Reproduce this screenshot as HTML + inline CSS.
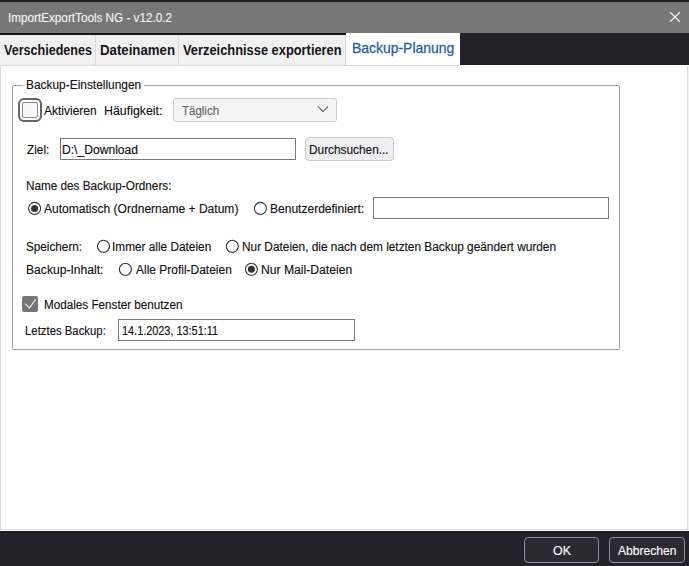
<!DOCTYPE html>
<html><head><meta charset="utf-8"><style>
html,body{margin:0;padding:0;width:689px;height:566px;overflow:hidden;background:#fff}
body{position:relative;font-family:"Liberation Sans",sans-serif}
.t{position:absolute;white-space:nowrap;font-family:"Liberation Sans",sans-serif}
.r{position:absolute;display:block}
</style></head><body>
<div class="r" style="left:0px;top:0px;width:689px;height:2px;background:#1c1b22"></div>
<div class="r" style="left:0px;top:2px;width:689px;height:31px;background:#777777"></div>
<div class="r" style="left:0px;top:33px;width:689px;height:2px;background:#15141a"></div>
<svg class="r" style="left:668px;top:10px" width="14" height="14" viewBox="0 0 14 14"><path d="M2.2 2.2 L11.8 11.8 M11.8 2.2 L2.2 11.8" stroke="#f2f2f2" stroke-width="1.25" fill="none"/></svg>
<div class="r" style="left:0px;top:35px;width:460px;height:30px;background:#f0f0f0"></div>
<div class="r" style="left:460px;top:33px;width:229px;height:32px;background:#23222b"></div>
<div class="r" style="left:95px;top:35px;width:1px;height:30px;background:#d9d9d9"></div>
<div class="r" style="left:178px;top:35px;width:1px;height:30px;background:#d9d9d9"></div>
<div class="r" style="left:345px;top:35px;width:1px;height:30px;background:#d9d9d9"></div>
<div class="r" style="left:346px;top:33px;width:114px;height:32px;background:#ffffff"></div>
<div class="r" style="left:0px;top:65px;width:460px;height:1px;background:#d9d9d9"></div>
<div class="r" style="left:0px;top:65px;width:1px;height:465px;background:#d9d9d9"></div>
<div class="r" style="left:687px;top:66px;width:1px;height:464px;background:#dcdcdc"></div>
<div class="r" style="left:688px;top:66px;width:1px;height:464px;background:#f0f0f0"></div>
<div class="r" style="left:0px;top:529px;width:688px;height:1px;background:#dcdcdc"></div>
<div class="r" style="left:0px;top:531px;width:689px;height:35px;background:#23222b"></div>
<div class="r" style="left:0px;top:531px;width:689px;height:1px;background:#16151b"></div>
<div class="r" style="left:524px;top:537px;width:75px;height:26px;background:#2b2a33;border:1.5px solid #8f8f9d;border-radius:4px;box-sizing:border-box"></div>
<div class="r" style="left:609px;top:537px;width:76px;height:26px;background:#2b2a33;border:1.5px solid #8f8f9d;border-radius:4px;box-sizing:border-box"></div>
<div class="r" style="left:12px;top:85px;width:608px;height:265px;border:1px solid #a0a0a0;border-radius:2px;box-sizing:border-box"></div>
<div class="r" style="left:23px;top:80px;width:121px;height:10px;background:#ffffff"></div>
<div class="r" style="left:18px;top:98px;width:24px;height:24px;border:2px solid #666666;border-radius:6px;box-sizing:border-box"></div>
<div class="r" style="left:22px;top:102px;width:16px;height:16px;border:1.5px solid #8c8c8c;background:#f7f7fc;border-radius:2px;box-sizing:border-box"></div>
<div class="r" style="left:173px;top:98px;width:164px;height:24px;background:#f5f5f5;border:1px solid #cfcfcf;border-radius:3px;box-sizing:border-box"></div>
<svg class="r" style="left:317px;top:105px" width="12" height="8" viewBox="0 0 12 8"><path d="M1 1.5 L6 6.5 L11 1.5" stroke="#4a4a4a" stroke-width="1.05" fill="none"/></svg>
<div class="r" style="left:60px;top:138px;width:236px;height:22px;border:1px solid #7a7a7a;background:#fff;box-sizing:border-box"></div>
<div class="r" style="left:305px;top:137px;width:89px;height:24px;background:#efeff2;border:1px solid #c7c7cc;border-radius:4px;box-sizing:border-box"></div>
<svg class="r" style="left:27px;top:201px" width="14" height="14" viewBox="0 0 14 14"><circle cx="7.60" cy="7.40" r="6" stroke="#333" stroke-width="1.1" fill="#fff"/><circle cx="7.60" cy="7.40" r="3.5" fill="#333"/></svg>
<svg class="r" style="left:253px;top:201px" width="14" height="14" viewBox="0 0 14 14"><circle cx="7.40" cy="7.40" r="6" stroke="#333" stroke-width="1.1" fill="#fff"/></svg>
<div class="r" style="left:373px;top:197px;width:236px;height:22px;border:1px solid #7a7a7a;background:#fff;box-sizing:border-box"></div>
<svg class="r" style="left:96px;top:239px" width="14" height="14" viewBox="0 0 14 14"><circle cx="7.50" cy="7.30" r="6" stroke="#333" stroke-width="1.1" fill="#fff"/></svg>
<svg class="r" style="left:225px;top:239px" width="14" height="14" viewBox="0 0 14 14"><circle cx="7.30" cy="7.30" r="6" stroke="#333" stroke-width="1.1" fill="#fff"/></svg>
<svg class="r" style="left:118px;top:262px" width="14" height="14" viewBox="0 0 14 14"><circle cx="7.40" cy="7.30" r="6" stroke="#333" stroke-width="1.1" fill="#fff"/></svg>
<svg class="r" style="left:244px;top:262px" width="14" height="14" viewBox="0 0 14 14"><circle cx="7.40" cy="7.30" r="6" stroke="#333" stroke-width="1.1" fill="#fff"/><circle cx="7.40" cy="7.30" r="3.5" fill="#333"/></svg>
<div class="r" style="left:22px;top:296px;width:16px;height:16px;background:#767676;border-radius:2px"></div>
<svg class="r" style="left:22px;top:296px" width="16" height="16" viewBox="0 0 16 16"><path d="M3.1 7.6 L7.5 11.8 L13.7 3.3" stroke="#ececec" stroke-width="1.15" fill="none"/></svg>
<div class="r" style="left:118px;top:319px;width:237px;height:22px;border:1px solid #7a7a7a;background:#fff;box-sizing:border-box"></div>
<div id="title" class="t" style="left:7.60px;top:11.00px;font-size:13px;line-height:13px;color:#f4f4f4;font-weight:normal;transform:scaleX(0.9008);transform-origin:0 0;-webkit-text-stroke:0.15px #f4f4f4;">ImportExportTools NG - v12.0.2</div>
<div id="tab1" class="t" style="left:3.60px;top:42.85px;font-size:14px;line-height:14px;color:#15141a;font-weight:bold;transform:scaleX(0.8974);transform-origin:0 0;">Verschiedenes</div>
<div id="tab2" class="t" style="left:100.39px;top:42.85px;font-size:14px;line-height:14px;color:#15141a;font-weight:bold;transform:scaleX(0.9455);transform-origin:0 0;">Dateinamen</div>
<div id="tab3" class="t" style="left:183.40px;top:42.85px;font-size:14px;line-height:14px;color:#15141a;font-weight:bold;transform:scaleX(0.9181);transform-origin:0 0;">Verzeichnisse exportieren</div>
<div id="tab4" class="t" style="left:351.99px;top:40.73px;font-size:14.5px;line-height:14.5px;color:#2a5f9f;font-weight:normal;transform:scaleX(0.9607);transform-origin:0 0;-webkit-text-stroke:0.3px #2a5f9f;">Backup-Planung</div>
<div id="legend" class="t" style="left:26.39px;top:78.64px;font-size:12px;line-height:12px;color:#121212;font-weight:normal;transform:scaleX(0.9926);transform-origin:0 0;-webkit-text-stroke:0.15px #121212;">Backup-Einstellungen</div>
<div id="aktiv" class="t" style="left:44.41px;top:105.14px;font-size:12px;line-height:12px;color:#121212;font-weight:normal;transform:scaleX(0.9985);transform-origin:0 0;-webkit-text-stroke:0.15px #121212;">Aktivieren</div>
<div id="haeuf" class="t" style="left:103.97px;top:105.14px;font-size:12px;line-height:12px;color:#121212;font-weight:normal;transform:scaleX(1.0310);transform-origin:0 0;-webkit-text-stroke:0.15px #121212;">Häufigkeit:</div>
<div id="taeglich" class="t" style="left:181.98px;top:105.44px;font-size:12px;line-height:12px;color:#666666;font-weight:normal;transform:scaleX(0.9579);transform-origin:0 0;-webkit-text-stroke:0.15px #666666;">Täglich</div>
<div id="ziel" class="t" style="left:26.81px;top:143.94px;font-size:12px;line-height:12px;color:#121212;font-weight:normal;transform:scaleX(0.9828);transform-origin:0 0;-webkit-text-stroke:0.15px #121212;">Ziel:</div>
<div id="download" class="t" style="left:61.97px;top:143.94px;font-size:12px;line-height:12px;color:#121212;font-weight:normal;transform:scaleX(1.0090);transform-origin:0 0;-webkit-text-stroke:0.15px #121212;">D:\_Download</div>
<div id="durch" class="t" style="left:309.37px;top:144.34px;font-size:12px;line-height:12px;color:#121212;font-weight:normal;transform:scaleX(0.9868);transform-origin:0 0;-webkit-text-stroke:0.15px #121212;">Durchsuchen...</div>
<div id="name" class="t" style="left:26.19px;top:179.54px;font-size:12px;line-height:12px;color:#121212;font-weight:normal;transform:scaleX(0.9777);transform-origin:0 0;-webkit-text-stroke:0.15px #121212;">Name des Backup-Ordners:</div>
<div id="auto" class="t" style="left:44.20px;top:202.74px;font-size:12px;line-height:12px;color:#121212;font-weight:normal;transform:scaleX(1.0034);transform-origin:0 0;-webkit-text-stroke:0.15px #121212;">Automatisch (Ordnername + Datum)</div>
<div id="benutz" class="t" style="left:269.58px;top:202.74px;font-size:12px;line-height:12px;color:#121212;font-weight:normal;transform:scaleX(1.0021);transform-origin:0 0;-webkit-text-stroke:0.15px #121212;">Benutzerdefiniert:</div>
<div id="speich" class="t" style="left:26.17px;top:240.64px;font-size:12px;line-height:12px;color:#121212;font-weight:normal;transform:scaleX(0.9774);transform-origin:0 0;-webkit-text-stroke:0.15px #121212;">Speichern:</div>
<div id="immer" class="t" style="left:112.38px;top:240.64px;font-size:12px;line-height:12px;color:#121212;font-weight:normal;transform:scaleX(0.9853);transform-origin:0 0;-webkit-text-stroke:0.15px #121212;">Immer alle Dateien</div>
<div id="nur" class="t" style="left:242.40px;top:240.64px;font-size:12px;line-height:12px;color:#121212;font-weight:normal;transform:scaleX(0.9868);transform-origin:0 0;-webkit-text-stroke:0.15px #121212;">Nur Dateien, die nach dem letzten Backup geändert wurden</div>
<div id="inhalt" class="t" style="left:26.17px;top:263.74px;font-size:12px;line-height:12px;color:#121212;font-weight:normal;transform:scaleX(1.0098);transform-origin:0 0;-webkit-text-stroke:0.15px #121212;">Backup-Inhalt:</div>
<div id="alle" class="t" style="left:135.60px;top:263.74px;font-size:12px;line-height:12px;color:#121212;font-weight:normal;transform:scaleX(0.9975);transform-origin:0 0;-webkit-text-stroke:0.15px #121212;">Alle Profil-Dateien</div>
<div id="mail" class="t" style="left:260.78px;top:263.74px;font-size:12px;line-height:12px;color:#121212;font-weight:normal;transform:scaleX(1.0133);transform-origin:0 0;-webkit-text-stroke:0.15px #121212;">Nur Mail-Dateien</div>
<div id="modal" class="t" style="left:43.59px;top:298.84px;font-size:12px;line-height:12px;color:#121212;font-weight:normal;transform:scaleX(0.9742);transform-origin:0 0;-webkit-text-stroke:0.15px #121212;">Modales Fenster benutzen</div>
<div id="letzt" class="t" style="left:25.37px;top:324.84px;font-size:12px;line-height:12px;color:#121212;font-weight:normal;transform:scaleX(0.9469);transform-origin:0 0;-webkit-text-stroke:0.15px #121212;">Letztes Backup:</div>
<div id="date" class="t" style="left:121.58px;top:324.64px;font-size:12px;line-height:12px;color:#121212;font-weight:normal;transform:scaleX(0.9069);transform-origin:0 0;-webkit-text-stroke:0.15px #121212;">14.1.2023, 13:51:11</div>
<div id="ok" class="t" style="left:553.45px;top:544.84px;font-size:12px;line-height:12px;color:#fbfbfe;font-weight:normal;transform:scaleX(1.0326);transform-origin:0 0;-webkit-text-stroke:0.15px #fbfbfe;">OK</div>
<div id="abbr" class="t" style="left:618.41px;top:544.74px;font-size:12px;line-height:12px;color:#fbfbfe;font-weight:normal;transform:scaleX(1.0063);transform-origin:0 0;-webkit-text-stroke:0.15px #fbfbfe;">Abbrechen</div>
</body></html>
